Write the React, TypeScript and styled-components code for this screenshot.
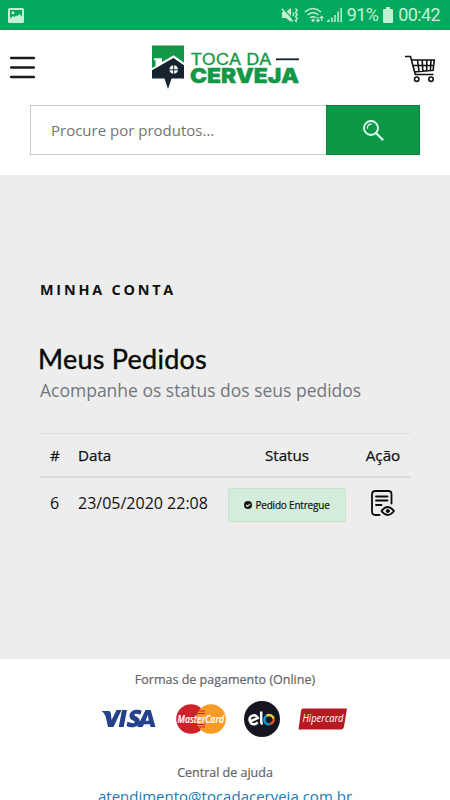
import React from "react";
import styled, { createGlobalStyle, css } from "styled-components";

const GlobalStyle = createGlobalStyle`
  * { box-sizing: border-box; }
  body { margin: 0; background: #fff; font-family: "Open Sans", sans-serif; color: #101010; }
`;

const Screen = styled.div`
  display: flex;
  flex-direction: column;
  width: 450px;
  height: 800px;
  overflow: hidden;
  background: #fff;
`;

const StatusBar = styled.div`
  flex: none;
  height: 30px;
  padding: 0 10px 0 8px;
  display: flex;
  align-items: center;
  justify-content: space-between;
  background: #03a95c;
  color: #c3f0d5;
`;

const StatusItems = styled.div`
  display: flex;
  align-items: center;
`;

const StatusText = styled.span<{ $spacing: number }>`
  font: 400 18px/32px Roboto, sans-serif;
  letter-spacing: ${(p) => p.$spacing}px;
  white-space: nowrap;
`;

const Header = styled.header`
  flex: none;
  height: 75px;
  padding: 14px 14px 0 10px;
  display: grid;
  grid-template-columns: 141px 150px 1fr;
  align-items: start;
`;

const IconButton = styled.button<{ $top: number; $end?: boolean }>`
  border: 0;
  padding: 0;
  background: none;
  display: flex;
  margin-top: ${(p) => p.$top}px;
  justify-self: ${(p) => (p.$end ? "end" : "start")};
`;

const SearchBar = styled.form`
  flex: none;
  height: 50px;
  margin: 0 30px 20px;
  display: flex;
`;

const SearchInput = styled.input`
  width: 296px;
  height: 50px;
  padding: 0 20px;
  border: 1px solid #c8c9cb;
  border-right: 0;
  border-radius: 0;
  outline: 0;
  background: #fff;
  font: 400 15px "Open Sans", sans-serif;
  &::placeholder { color: #747474; opacity: 1; }
`;

const SearchButton = styled.button`
  flex: 1;
  border: 1px solid #078640;
  padding: 0;
  background: #0d9848;
  display: flex;
  align-items: center;
  justify-content: center;
`;

const Account = styled.main`
  flex: none;
  height: 484px;
  padding: 103px 39px 0 40px;
  background: #ededed;
`;

const Eyebrow = styled.h2`
  margin: 0;
  font-size: 14.4px;
  line-height: 23px;
  font-weight: 700;
  letter-spacing: 2.8px;
`;

const Title = styled.h1`
  margin: 41px 0 0 -2px;
  font: 400 27px/34px Lato, sans-serif;
  letter-spacing: 0.25px;
  -webkit-text-stroke: 0.4px #080808;
  color: #080808;
`;

const Subtitle = styled.p`
  margin: 2px 0 0;
  font-size: 17.5px;
  line-height: 24px;
  color: #74777b;
`;

const Table = styled.div`
  margin-top: 31px;
  border-top: 1px solid #dedfe3;
`;

const columns = css`
  display: grid;
  grid-template-columns: 28px 160px 118px 10px 54px;
`;

const HeadRow = styled.div`
  ${columns}
  height: 44px;
  align-items: center;
  border-bottom: 2px solid #d9dae2;
`;

const BodyRow = styled.div`
  ${columns}
  padding-top: 10px;
  align-items: start;
`;

const Cell = styled.div<{ $center?: boolean; $head?: boolean; $last?: boolean }>`
  padding-left: 10px;
  font-size: ${(p) => (p.$head ? 15.2 : 16)}px;
  font-weight: ${(p) => (p.$head ? 500 : 400)};
  line-height: 30px;
  white-space: nowrap;
  ${(p) => p.$head && css`-webkit-text-stroke: 0.25px #101010;`}
  ${(p) => p.$center && css`display: flex; justify-content: center; padding-left: 0;`}
  ${(p) => p.$last && css`grid-column: 5;`}
`;

const Badge = styled.div`
  width: 118px;
  height: 34px;
  border: 1px solid #c3e6cb;
  border-radius: 2px;
  background: #d4edda;
  display: flex;
  align-items: center;
  justify-content: center;
  gap: 3px;
  font-size: 10px;
  line-height: 14px;
  letter-spacing: -0.2px;
  -webkit-text-stroke: 0.2px #101010;
`;

const ActionSlot = styled.div`
  display: flex;
  padding-top: 2px;
`;

const Footer = styled.footer`
  flex: none;
  display: flex;
  flex-direction: column;
  align-items: center;
  padding-top: 11px;
`;

const FooterTitle = styled.h3`
  margin: 0;
  font-size: 12.5px;
  line-height: 20px;
  font-weight: 500;
  color: #626469;
  -webkit-text-stroke: 0.2px #626469;
`;

const Brands = styled.div`
  display: flex;
  align-items: center;
  height: 40px;
  margin: 9px 2px 24px 0;
  gap: 18px;
`;

const BrandSlot = styled.span<{ $after?: number }>`
  display: flex;
  margin-right: ${(p) => p.$after ?? 0}px;
`;

const MailLink = styled.a`
  margin-top: 2px;
  font-size: 15px;
  line-height: 22px;
  color: #2078b0;
  text-decoration: none;
`;

const ImageIcon = () => (
  <svg width="16" height="15" viewBox="0 0 16 15">
    <path fill="#c3f0d5" fillRule="evenodd" d="M1.500 0h13Q16 0 16 1.500v12q0 1.500-1.500 1.500h-13Q0 15 0 13.500v-12Q0 0 1.500 0ZM2 2v8.500L5 8l2 1 1-1.500 1.500.5 2-2 2.500 2.500V2Z" />
    <circle cx="5" cy="4.700" r="1.500" fill="#c3f0d5" />
  </svg>
);

const SignalIcons = () => (
  <svg width="61" height="18" viewBox="281 6 61 18" fill="none" stroke="#c3f0d5">
    <path fill="#c3f0d5" stroke="none" d="M282 12h4l5-4v14l-5-4h-4Z" />
    <path stroke="#03a95c" strokeWidth="1.200" d="m283 8.500 11 12" />
    <path strokeWidth="1.300" d="m281.800 8.800 11 12.500" />
    <path strokeWidth="1.400" d="m295.500 8.500 1.700 2-1.700 2 1.700 2-1.700 2 1.700 2-1.700 2 1.200 1.500M293 12.500l.8 1.700-.8 1.800" />
    <path strokeWidth="1.600" d="M305 12q8-7 16 0M307.500 15q5.500-4.500 11 0M310 18q3-2.500 6 0" />
    <circle cx="313" cy="20.300" r="1.500" fill="#c3f0d5" stroke="none" />
    <path strokeWidth="1.200" d="M318 17v4.500m-1.700-1.700 1.700 1.900 1.700-1.900M321.700 21v-4.500m-1.700 1.700 1.700-1.900 1.700 1.900" />
    <path strokeWidth="1.500" d="M332 22v-4.500M335 22v-7M338.100 22V11.500M341.200 22V8" />
    <path fill="#c3f0d5" stroke="none" d="M327 22v-1l2.500-2v3Z" />
  </svg>
);

const BatteryIcon = () => (
  <svg width="10" height="16" viewBox="0 0 10 16">
    <path fill="#c3f0d5" d="M3 0h4v2h2q1 0 1 1v12q0 1-1 1H1q-1 0-1-1V3q0-1 1-1h2Z" />
  </svg>
);

const MenuIcon = () => (
  <svg width="25" height="23" viewBox="0 0 25 23">
    <path d="M1.200 2h22.600M1.200 11.500h22.600M1.200 21h22.600" stroke="#17191c" strokeWidth="2.500" strokeLinecap="round" />
  </svg>
);

const Logo = () => (
  <svg width="150" height="46" viewBox="151 44 150 46">
    <path fill="#139848" d="M152 45.500h32v17.200L173.700 55.300 162 62V58.200H154v2h1.500v5.800L152 68Z" />
    <path fill="#17242f" d="M152 70.300 173.500 58 184 65.300v13.200h-12.500L168 89l-3.500-10.500H152Z" />
    <circle cx="173.700" cy="69.500" r="4.300" fill="#fff" />
    <path d="M173.700 64.500v10M168.700 69.800h10" stroke="#17242f" strokeWidth="1" />
    <text x="190.500" y="64.500" fill="#159748" stroke="#159748" strokeWidth=".3" fontFamily="Inter, sans-serif" fontSize="15.500" textLength="81" lengthAdjust="spacingAndGlyphs">TOCA DA</text>
    <path d="M276 59.300h23" stroke="#17242f" strokeWidth="1.800" />
    <text x="190" y="83" fill="#159748" stroke="#159748" strokeWidth=".4" fontFamily="Inter, sans-serif" fontWeight="900" fontSize="20.500" textLength="109" lengthAdjust="spacingAndGlyphs">CERVEJA</text>
  </svg>
);

const CartIcon = () => (
  <svg width="31" height="28" viewBox="405 55 31 28" fill="none" stroke="#111" strokeWidth="1.600">
    <path d="M405 56.500h5.500l4.800 18h18.200M411.300 60h23l-1.200 10.300-19 1.700M412.800 65.500h20.800M417.500 60l1.500 11.500M422.200 60l.6 11.300M426.800 60l-.1 11M431 60l-.6 10.500" />
    <circle cx="416.700" cy="79.200" r="2.200" />
    <circle cx="431" cy="79.200" r="2.200" />
  </svg>
);

const SearchIcon = () => (
  <svg width="21" height="21" viewBox="0 0 21 21" fill="none" stroke="#dcfff1" strokeLinecap="round">
    <circle cx="8" cy="8" r="7" strokeWidth="1.900" />
    <path d="M4.300 8.200q.2-3.800 4-4" strokeWidth="1.300" />
    <path d="m13 13 6.500 6.500" strokeWidth="2.200" />
  </svg>
);

const CheckIcon = () => (
  <svg width="8" height="8" viewBox="0 0 8 8">
    <circle cx="4" cy="4" r="4" fill="#111" />
    <path d="m2 4 1.500 1.500L6.200 2.800" fill="none" stroke="#d4edda" strokeWidth="1.100" />
  </svg>
);

const OrderIcon = () => (
  <svg width="25" height="27" viewBox="371 491 25 27" fill="none" stroke="#0c0c0c" strokeWidth="1.800" strokeLinecap="round" strokeLinejoin="round">
    <path d="M379.500 516h-4q-3.500 0-3.500-3.500v-17q0-3.500 3.500-3.500h13q3 0 3 3v9.500M376 497.500h11.500M376 501.500h11.500M376 506h5.500" />
    <path d="M381.500 512q6-8 12.500 0-6.500 8-12.500 0Z" />
    <circle cx="387.800" cy="512" r="1.700" fill="#0c0c0c" strokeWidth=".6" />
  </svg>
);

const Visa = () => (
  <svg width="55" height="20" viewBox="0 0 54 20">
    <path fill="#24418c" d="M0 2h7q2 0 2.300 2l.8 7L15 1h5l-8 17H6.500L4 7Q3 4 0 2ZM20.500 1h5l-3.300 17h-5ZM40 1.500 39 5.700q-6-2-6 .3c0 1.500 5.300 2 5.300 6.300 0 6.200-8.500 7.200-13.300 4.700l1-4.200q6.500 2.400 7.200.5c.4-1.700-5.300-1.700-5.200-6.300.1-6.200 7.500-7.500 12-5.500ZM44 1h5.200L54 18h-5l-.5-2.800h-6L41 18h-5.200ZM46.300 6l-2.200 5.700h3.200Z" />
  </svg>
);

const MasterCard = () => (
  <svg width="50" height="30" viewBox="0 0 50 30">
    <circle cx="15" cy="15" r="14.800" fill="#d0202b" />
    <circle cx="35" cy="15" r="14.800" fill="#f79b25" />
    <path d="M22 7h7M21 9.500h8M21 20.500h8M22 23h7" stroke="#d0202b" strokeWidth="1.200" />
    <text x="1.500" y="18.800" fill="#fff" stroke="#fff" strokeWidth=".2" fontFamily="Open Sans, sans-serif" fontStyle="italic" fontWeight="600" fontSize="10.500" textLength="46.500" lengthAdjust="spacingAndGlyphs">MasterCard</text>
  </svg>
);

const Elo = () => (
  <svg width="36" height="36" viewBox="0 0 36 36">
    <circle cx="18" cy="18" r="18" fill="#15161f" />
    <g fill="none" strokeWidth="2.500">
      <path d="m6 20.500 7.800-3.500c-1.800-5-9.500-2.300-8 3 1.200 4 5.500 4.300 7.800 1.200M17.200 10.500v10.200q0 1.800 1.500 2.300" stroke="#fff" />
      <path d="M21.700 22.200a4.900 4.900 0 0 1 .8-7.400" stroke="#149bd2" />
      <path d="M22.500 14.800a4.800 4.800 0 0 1 7.200 3" stroke="#ecd238" />
      <path d="M29.700 18a5 5 0 0 1-4 5" stroke="#e04c2b" />
      <path d="M25.700 23.200a5 5 0 0 1-4-1" stroke="#149bd2" />
    </g>
  </svg>
);

const Hipercard = () => (
  <svg width="50" height="22" viewBox="0 0 50 22">
    <path d="M4.500.5H49l-3 18q-.4 3-3.500 3H.5L3 3Q3.300.5 4.500.5Z" fill="#b71920" />
    <text x="4.500" y="14" fill="#fff" fontFamily="Open Sans, sans-serif" fontStyle="italic" fontSize="10" textLength="41" lengthAdjust="spacingAndGlyphs">Hipercard</text>
  </svg>
);

const StatusGap = styled.span<{ $w: number }>`
  width: ${(p) => p.$w}px;
`;

const orders = [{ id: "6", date: "23/05/2020 22:08", status: "Pedido Entregue" }];

export default function App() {
  return (
    <Screen>
      <GlobalStyle />
      <StatusBar>
        <ImageIcon />
        <StatusItems>
          <SignalIcons />
          <StatusGap $w={5} />
          <StatusText $spacing={-0.7}>91%</StatusText>
          <StatusGap $w={5} />
          <BatteryIcon />
          <StatusGap $w={5} />
          <StatusText $spacing={-0.6}>00:42</StatusText>
        </StatusItems>
      </StatusBar>
      <Header>
        <IconButton $top={12} aria-label="Menu"><MenuIcon /></IconButton>
        <Logo />
        <IconButton $top={11} $end aria-label="Carrinho"><CartIcon /></IconButton>
      </Header>
      <SearchBar onSubmit={(e) => e.preventDefault()}>
        <SearchInput placeholder="Procure por produtos..." />
        <SearchButton aria-label="Buscar"><SearchIcon /></SearchButton>
      </SearchBar>
      <Account>
        <Eyebrow>MINHA CONTA</Eyebrow>
        <Title>Meus Pedidos</Title>
        <Subtitle>Acompanhe os status dos seus pedidos</Subtitle>
        <Table>
          <HeadRow>
            <Cell $head>#</Cell>
            <Cell $head>Data</Cell>
            <Cell $head $center>Status</Cell>
            <Cell $head $center $last>Ação</Cell>
          </HeadRow>
          {orders.map((o) => (
            <BodyRow key={o.id}>
              <Cell>{o.id}</Cell>
              <Cell>{o.date}</Cell>
              <Cell $center>
                <Badge><CheckIcon />{o.status}</Badge>
              </Cell>
              <Cell $center $last>
                <ActionSlot><OrderIcon /></ActionSlot>
              </Cell>
            </BodyRow>
          ))}
        </Table>
      </Account>
      <Footer>
        <FooterTitle>Formas de pagamento (Online)</FooterTitle>
        <Brands>
          <BrandSlot $after={2}><Visa /></BrandSlot>
          <BrandSlot><MasterCard /></BrandSlot>
          <BrandSlot><Elo /></BrandSlot>
          <BrandSlot><Hipercard /></BrandSlot>
        </Brands>
        <FooterTitle>Central de ajuda</FooterTitle>
        <MailLink href="mailto:atendimento@tocadacerveja.com.br">atendimento@tocadacerveja.com.br</MailLink>
      </Footer>
    </Screen>
  );
}
